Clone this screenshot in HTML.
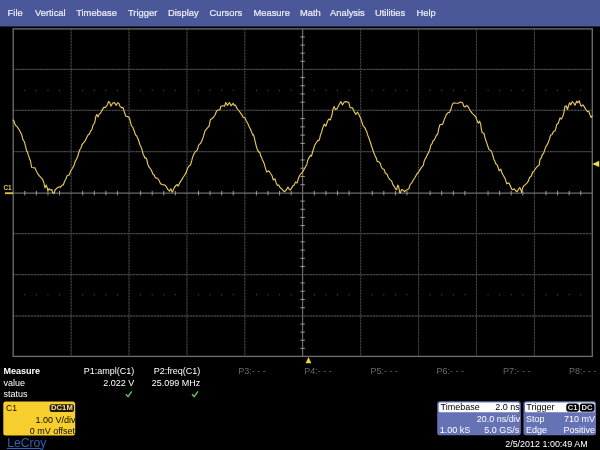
<!DOCTYPE html>
<html><head><meta charset="utf-8"><title>LeCroy</title>
<style>
html,body{margin:0;padding:0;background:#000;}
body{width:600px;height:450px;position:relative;overflow:hidden;font-family:"Liberation Sans",Arial,sans-serif;font-size:9px;color:#fff;}
#wrap{position:absolute;left:0;top:0;width:600px;height:450px;will-change:transform;overflow:hidden}
#menu{position:absolute;left:0;top:0;width:600px;height:25.5px;background:#4a5799;border-bottom:1.5px solid #20274d;box-sizing:content-box}
.mi{position:absolute;top:8.3px;-webkit-text-stroke:0.2px #eef0fa;font-size:9.35px;line-height:11px;color:#eef0fa;white-space:nowrap}
svg{position:absolute;left:0;top:0}
.gv{stroke:#484848;stroke-width:1;stroke-dasharray:1.5 1.5}
.gu{stroke:#262626;stroke-width:1}
.gu2{stroke:#2e2e2e;stroke-width:1}
.gh{stroke:#565656;stroke-width:1;stroke-dasharray:1.5 1.5}
.dot{fill:#5c5c5c}
.ax{stroke:#6c6c6c;stroke-width:1.2}
.tk{stroke:#9c9c9c;stroke-width:1}
.bd{fill:none;stroke:#707070;stroke-width:1.3}
.wf{fill:none;stroke:#e5c95c;stroke-width:1.15;stroke-linejoin:round;stroke-linecap:round}
.t{position:absolute;white-space:nowrap;line-height:11px;font-size:9px}
.r{text-align:right}
.pn{position:absolute;top:365.5px;white-space:nowrap;line-height:11px;font-size:9px;color:#6a6a6a}
#c1box{position:absolute;left:3.3px;top:401.5px;width:71.9px;height:34.2px;overflow:hidden;color:#1a1400}
#dc1m{position:absolute;left:46.5px;top:2.7px;width:24.2px;height:7.7px;color:#efe0a0;font-weight:bold;font-size:7.6px;line-height:8px;text-align:center;letter-spacing:0.1px}
.box{position:absolute;top:401.3px;height:34.3px;overflow:hidden}
.hd{display:none}
.bt{position:absolute;white-space:nowrap;line-height:11px;font-size:9px;color:#fff}
.bk{color:#000}
.bad{position:absolute;top:2.1px;height:8.5px;color:#e4e4e4;font-weight:bold;font-size:7.6px;line-height:10.4px;text-align:center}
#logo{position:absolute;left:7.2px;top:436.5px;font-size:12.15px;line-height:13px;color:#2f63b3;white-space:nowrap}
#logoul{position:absolute;left:7.3px;top:448.2px;width:34.2px;height:1.3px;background:#2f63b3}
</style></head><body>
<div id="wrap">
<div id="menu">
<span class="mi" style="left:7.6px">File</span>
<span class="mi" style="left:35px">Vertical</span>
<span class="mi" style="left:76.2px">Timebase</span>
<span class="mi" style="left:128px">Trigger</span>
<span class="mi" style="left:168px">Display</span>
<span class="mi" style="left:209.5px">Cursors</span>
<span class="mi" style="left:253.5px">Measure</span>
<span class="mi" style="left:300px">Math</span>
<span class="mi" style="left:330px">Analysis</span>
<span class="mi" style="left:375px">Utilities</span>
<span class="mi" style="left:416.5px">Help</span>
</div>
<svg width="600" height="450" viewBox="0 0 600 450">
<line x1="71.11" y1="28.9" x2="71.11" y2="356.4" class="gu"/>
<line x1="71.11" y1="28.9" x2="71.11" y2="356.4" class="gv"/>
<line x1="129.02" y1="28.9" x2="129.02" y2="356.4" class="gu"/>
<line x1="129.02" y1="28.9" x2="129.02" y2="356.4" class="gv"/>
<line x1="186.93" y1="28.9" x2="186.93" y2="356.4" class="gu"/>
<line x1="186.93" y1="28.9" x2="186.93" y2="356.4" class="gv"/>
<line x1="244.84" y1="28.9" x2="244.84" y2="356.4" class="gu"/>
<line x1="244.84" y1="28.9" x2="244.84" y2="356.4" class="gv"/>
<line x1="360.66" y1="28.9" x2="360.66" y2="356.4" class="gu"/>
<line x1="360.66" y1="28.9" x2="360.66" y2="356.4" class="gv"/>
<line x1="418.57" y1="28.9" x2="418.57" y2="356.4" class="gu"/>
<line x1="418.57" y1="28.9" x2="418.57" y2="356.4" class="gv"/>
<line x1="476.48" y1="28.9" x2="476.48" y2="356.4" class="gu"/>
<line x1="476.48" y1="28.9" x2="476.48" y2="356.4" class="gv"/>
<line x1="534.39" y1="28.9" x2="534.39" y2="356.4" class="gu"/>
<line x1="534.39" y1="28.9" x2="534.39" y2="356.4" class="gv"/>
<line x1="13.2" y1="69.40" x2="592.3" y2="69.40" class="gu2"/>
<line x1="13.2" y1="69.40" x2="592.3" y2="69.40" class="gh"/>
<line x1="13.2" y1="110.30" x2="592.3" y2="110.30" class="gu2"/>
<line x1="13.2" y1="110.30" x2="592.3" y2="110.30" class="gh"/>
<line x1="13.2" y1="151.70" x2="592.3" y2="151.70" class="gu2"/>
<line x1="13.2" y1="151.70" x2="592.3" y2="151.70" class="gh"/>
<line x1="13.2" y1="233.70" x2="592.3" y2="233.70" class="gu2"/>
<line x1="13.2" y1="233.70" x2="592.3" y2="233.70" class="gh"/>
<line x1="13.2" y1="274.70" x2="592.3" y2="274.70" class="gu2"/>
<line x1="13.2" y1="274.70" x2="592.3" y2="274.70" class="gh"/>
<line x1="13.2" y1="316.00" x2="592.3" y2="316.00" class="gu2"/>
<line x1="13.2" y1="316.00" x2="592.3" y2="316.00" class="gh"/>
<rect x="24.28" y="89.80" width="1" height="1" class="dot"/>
<rect x="35.86" y="89.80" width="1" height="1" class="dot"/>
<rect x="47.45" y="89.80" width="1" height="1" class="dot"/>
<rect x="59.03" y="89.80" width="1" height="1" class="dot"/>
<rect x="82.19" y="89.80" width="1" height="1" class="dot"/>
<rect x="93.77" y="89.80" width="1" height="1" class="dot"/>
<rect x="105.36" y="89.80" width="1" height="1" class="dot"/>
<rect x="116.94" y="89.80" width="1" height="1" class="dot"/>
<rect x="140.10" y="89.80" width="1" height="1" class="dot"/>
<rect x="151.68" y="89.80" width="1" height="1" class="dot"/>
<rect x="163.27" y="89.80" width="1" height="1" class="dot"/>
<rect x="174.85" y="89.80" width="1" height="1" class="dot"/>
<rect x="198.01" y="89.80" width="1" height="1" class="dot"/>
<rect x="209.59" y="89.80" width="1" height="1" class="dot"/>
<rect x="221.18" y="89.80" width="1" height="1" class="dot"/>
<rect x="232.76" y="89.80" width="1" height="1" class="dot"/>
<rect x="255.92" y="89.80" width="1" height="1" class="dot"/>
<rect x="267.50" y="89.80" width="1" height="1" class="dot"/>
<rect x="279.09" y="89.80" width="1" height="1" class="dot"/>
<rect x="290.67" y="89.80" width="1" height="1" class="dot"/>
<rect x="313.83" y="89.80" width="1" height="1" class="dot"/>
<rect x="325.41" y="89.80" width="1" height="1" class="dot"/>
<rect x="337.00" y="89.80" width="1" height="1" class="dot"/>
<rect x="348.58" y="89.80" width="1" height="1" class="dot"/>
<rect x="371.74" y="89.80" width="1" height="1" class="dot"/>
<rect x="383.32" y="89.80" width="1" height="1" class="dot"/>
<rect x="394.91" y="89.80" width="1" height="1" class="dot"/>
<rect x="406.49" y="89.80" width="1" height="1" class="dot"/>
<rect x="429.65" y="89.80" width="1" height="1" class="dot"/>
<rect x="441.23" y="89.80" width="1" height="1" class="dot"/>
<rect x="452.82" y="89.80" width="1" height="1" class="dot"/>
<rect x="464.40" y="89.80" width="1" height="1" class="dot"/>
<rect x="487.56" y="89.80" width="1" height="1" class="dot"/>
<rect x="499.14" y="89.80" width="1" height="1" class="dot"/>
<rect x="510.73" y="89.80" width="1" height="1" class="dot"/>
<rect x="522.31" y="89.80" width="1" height="1" class="dot"/>
<rect x="545.47" y="89.80" width="1" height="1" class="dot"/>
<rect x="557.05" y="89.80" width="1" height="1" class="dot"/>
<rect x="568.64" y="89.80" width="1" height="1" class="dot"/>
<rect x="580.22" y="89.80" width="1" height="1" class="dot"/>
<rect x="24.28" y="294.30" width="1" height="1" class="dot"/>
<rect x="35.86" y="294.30" width="1" height="1" class="dot"/>
<rect x="47.45" y="294.30" width="1" height="1" class="dot"/>
<rect x="59.03" y="294.30" width="1" height="1" class="dot"/>
<rect x="82.19" y="294.30" width="1" height="1" class="dot"/>
<rect x="93.77" y="294.30" width="1" height="1" class="dot"/>
<rect x="105.36" y="294.30" width="1" height="1" class="dot"/>
<rect x="116.94" y="294.30" width="1" height="1" class="dot"/>
<rect x="140.10" y="294.30" width="1" height="1" class="dot"/>
<rect x="151.68" y="294.30" width="1" height="1" class="dot"/>
<rect x="163.27" y="294.30" width="1" height="1" class="dot"/>
<rect x="174.85" y="294.30" width="1" height="1" class="dot"/>
<rect x="198.01" y="294.30" width="1" height="1" class="dot"/>
<rect x="209.59" y="294.30" width="1" height="1" class="dot"/>
<rect x="221.18" y="294.30" width="1" height="1" class="dot"/>
<rect x="232.76" y="294.30" width="1" height="1" class="dot"/>
<rect x="255.92" y="294.30" width="1" height="1" class="dot"/>
<rect x="267.50" y="294.30" width="1" height="1" class="dot"/>
<rect x="279.09" y="294.30" width="1" height="1" class="dot"/>
<rect x="290.67" y="294.30" width="1" height="1" class="dot"/>
<rect x="313.83" y="294.30" width="1" height="1" class="dot"/>
<rect x="325.41" y="294.30" width="1" height="1" class="dot"/>
<rect x="337.00" y="294.30" width="1" height="1" class="dot"/>
<rect x="348.58" y="294.30" width="1" height="1" class="dot"/>
<rect x="371.74" y="294.30" width="1" height="1" class="dot"/>
<rect x="383.32" y="294.30" width="1" height="1" class="dot"/>
<rect x="394.91" y="294.30" width="1" height="1" class="dot"/>
<rect x="406.49" y="294.30" width="1" height="1" class="dot"/>
<rect x="429.65" y="294.30" width="1" height="1" class="dot"/>
<rect x="441.23" y="294.30" width="1" height="1" class="dot"/>
<rect x="452.82" y="294.30" width="1" height="1" class="dot"/>
<rect x="464.40" y="294.30" width="1" height="1" class="dot"/>
<rect x="487.56" y="294.30" width="1" height="1" class="dot"/>
<rect x="499.14" y="294.30" width="1" height="1" class="dot"/>
<rect x="510.73" y="294.30" width="1" height="1" class="dot"/>
<rect x="522.31" y="294.30" width="1" height="1" class="dot"/>
<rect x="545.47" y="294.30" width="1" height="1" class="dot"/>
<rect x="557.05" y="294.30" width="1" height="1" class="dot"/>
<rect x="568.64" y="294.30" width="1" height="1" class="dot"/>
<rect x="580.22" y="294.30" width="1" height="1" class="dot"/>
<line x1="13.2" y1="193.10" x2="592.3" y2="193.10" class="ax"/>
<line x1="302.60" y1="28.9" x2="302.60" y2="356.4" class="ax"/>
<line x1="24.78" y1="190.90" x2="24.78" y2="195.30" class="tk"/>
<line x1="36.36" y1="190.90" x2="36.36" y2="195.30" class="tk"/>
<line x1="47.95" y1="190.90" x2="47.95" y2="195.30" class="tk"/>
<line x1="59.53" y1="190.90" x2="59.53" y2="195.30" class="tk"/>
<line x1="82.69" y1="190.90" x2="82.69" y2="195.30" class="tk"/>
<line x1="94.27" y1="190.90" x2="94.27" y2="195.30" class="tk"/>
<line x1="105.86" y1="190.90" x2="105.86" y2="195.30" class="tk"/>
<line x1="117.44" y1="190.90" x2="117.44" y2="195.30" class="tk"/>
<line x1="140.60" y1="190.90" x2="140.60" y2="195.30" class="tk"/>
<line x1="152.18" y1="190.90" x2="152.18" y2="195.30" class="tk"/>
<line x1="163.77" y1="190.90" x2="163.77" y2="195.30" class="tk"/>
<line x1="175.35" y1="190.90" x2="175.35" y2="195.30" class="tk"/>
<line x1="198.51" y1="190.90" x2="198.51" y2="195.30" class="tk"/>
<line x1="210.09" y1="190.90" x2="210.09" y2="195.30" class="tk"/>
<line x1="221.68" y1="190.90" x2="221.68" y2="195.30" class="tk"/>
<line x1="233.26" y1="190.90" x2="233.26" y2="195.30" class="tk"/>
<line x1="256.42" y1="190.90" x2="256.42" y2="195.30" class="tk"/>
<line x1="268.00" y1="190.90" x2="268.00" y2="195.30" class="tk"/>
<line x1="279.59" y1="190.90" x2="279.59" y2="195.30" class="tk"/>
<line x1="291.17" y1="190.90" x2="291.17" y2="195.30" class="tk"/>
<line x1="314.33" y1="190.90" x2="314.33" y2="195.30" class="tk"/>
<line x1="325.91" y1="190.90" x2="325.91" y2="195.30" class="tk"/>
<line x1="337.50" y1="190.90" x2="337.50" y2="195.30" class="tk"/>
<line x1="349.08" y1="190.90" x2="349.08" y2="195.30" class="tk"/>
<line x1="372.24" y1="190.90" x2="372.24" y2="195.30" class="tk"/>
<line x1="383.82" y1="190.90" x2="383.82" y2="195.30" class="tk"/>
<line x1="395.41" y1="190.90" x2="395.41" y2="195.30" class="tk"/>
<line x1="406.99" y1="190.90" x2="406.99" y2="195.30" class="tk"/>
<line x1="430.15" y1="190.90" x2="430.15" y2="195.30" class="tk"/>
<line x1="441.73" y1="190.90" x2="441.73" y2="195.30" class="tk"/>
<line x1="453.32" y1="190.90" x2="453.32" y2="195.30" class="tk"/>
<line x1="464.90" y1="190.90" x2="464.90" y2="195.30" class="tk"/>
<line x1="488.06" y1="190.90" x2="488.06" y2="195.30" class="tk"/>
<line x1="499.64" y1="190.90" x2="499.64" y2="195.30" class="tk"/>
<line x1="511.23" y1="190.90" x2="511.23" y2="195.30" class="tk"/>
<line x1="522.81" y1="190.90" x2="522.81" y2="195.30" class="tk"/>
<line x1="545.97" y1="190.90" x2="545.97" y2="195.30" class="tk"/>
<line x1="557.55" y1="190.90" x2="557.55" y2="195.30" class="tk"/>
<line x1="569.14" y1="190.90" x2="569.14" y2="195.30" class="tk"/>
<line x1="580.72" y1="190.90" x2="580.72" y2="195.30" class="tk"/>
<line x1="300.40" y1="37.00" x2="304.80" y2="37.00" class="tk"/>
<line x1="300.40" y1="45.10" x2="304.80" y2="45.10" class="tk"/>
<line x1="300.40" y1="53.20" x2="304.80" y2="53.20" class="tk"/>
<line x1="300.40" y1="61.30" x2="304.80" y2="61.30" class="tk"/>
<line x1="300.40" y1="77.58" x2="304.80" y2="77.58" class="tk"/>
<line x1="300.40" y1="85.76" x2="304.80" y2="85.76" class="tk"/>
<line x1="300.40" y1="93.94" x2="304.80" y2="93.94" class="tk"/>
<line x1="300.40" y1="102.12" x2="304.80" y2="102.12" class="tk"/>
<line x1="300.40" y1="118.58" x2="304.80" y2="118.58" class="tk"/>
<line x1="300.40" y1="126.86" x2="304.80" y2="126.86" class="tk"/>
<line x1="300.40" y1="135.14" x2="304.80" y2="135.14" class="tk"/>
<line x1="300.40" y1="143.42" x2="304.80" y2="143.42" class="tk"/>
<line x1="300.40" y1="159.96" x2="304.80" y2="159.96" class="tk"/>
<line x1="300.40" y1="168.22" x2="304.80" y2="168.22" class="tk"/>
<line x1="300.40" y1="176.48" x2="304.80" y2="176.48" class="tk"/>
<line x1="300.40" y1="184.74" x2="304.80" y2="184.74" class="tk"/>
<line x1="300.40" y1="201.14" x2="304.80" y2="201.14" class="tk"/>
<line x1="300.40" y1="209.28" x2="304.80" y2="209.28" class="tk"/>
<line x1="300.40" y1="217.42" x2="304.80" y2="217.42" class="tk"/>
<line x1="300.40" y1="225.56" x2="304.80" y2="225.56" class="tk"/>
<line x1="300.40" y1="241.90" x2="304.80" y2="241.90" class="tk"/>
<line x1="300.40" y1="250.10" x2="304.80" y2="250.10" class="tk"/>
<line x1="300.40" y1="258.30" x2="304.80" y2="258.30" class="tk"/>
<line x1="300.40" y1="266.50" x2="304.80" y2="266.50" class="tk"/>
<line x1="300.40" y1="282.96" x2="304.80" y2="282.96" class="tk"/>
<line x1="300.40" y1="291.22" x2="304.80" y2="291.22" class="tk"/>
<line x1="300.40" y1="299.48" x2="304.80" y2="299.48" class="tk"/>
<line x1="300.40" y1="307.74" x2="304.80" y2="307.74" class="tk"/>
<line x1="300.40" y1="324.08" x2="304.80" y2="324.08" class="tk"/>
<line x1="300.40" y1="332.16" x2="304.80" y2="332.16" class="tk"/>
<line x1="300.40" y1="340.24" x2="304.80" y2="340.24" class="tk"/>
<line x1="300.40" y1="348.32" x2="304.80" y2="348.32" class="tk"/>
<rect x="13.2" y="28.9" width="579.10" height="327.50" class="bd"/>
<polyline class="wf" points="13.0,120.2 13.7,120.1 14.7,123.5 15.8,125.6 17.0,126.5 18.1,128.1 19.3,130.0 20.1,131.6 21.7,134.7 22.8,139.4 23.5,140.5 24.5,142.0 25.2,145.2 26.6,150.6 27.5,152.2 28.4,155.4 29.8,159.2 30.5,161.0 31.7,167.5 35.0,167.9 36.2,170.8 37.5,173.3 39.6,176.2 42.5,179.2 43.8,182.5 45.0,187.9 46.2,185.0 47.5,188.8 47.9,190.8 49.0,188.8 50.4,190.0 51.8,189.6 52.7,192.9 54.2,193.3 55.0,190.0 56.7,188.3 59.2,186.8 60.4,187.3 62.1,185.0 63.3,185.0 64.6,181.2 65.8,179.2 67.1,175.8 69.2,175.0 70.8,170.8 72.5,168.3 74.2,165.0 75.2,161.4 76.5,159.2 77.9,156.1 78.9,152.2 79.9,149.5 81.2,147.5 82.1,144.5 83.5,142.9 84.9,141.2 85.9,139.4 86.7,137.6 88.2,134.7 89.3,134.1 90.6,131.2 91.5,130.1 92.2,128.7 93.0,125.3 94.7,122.8 95.9,116.2 96.8,114.5 98.0,117.0 99.2,114.1 100.5,113.2 102.2,109.9 103.8,107.4 105.5,107.4 107.6,104.5 108.4,101.6 109.7,102.4 110.9,106.2 112.6,103.2 114.2,102.4 116.3,105.3 117.6,102.8 118.8,103.2 120.1,106.6 121.8,107.8 123.0,107.4 124.2,111.6 125.9,116.2 127.6,116.6 128.8,117.0 130.1,120.3 131.3,125.3 133.0,127.8 134.3,131.2 135.5,135.0 136.7,135.9 138.2,139.2 139.0,141.7 140.0,145.0 141.3,147.5 142.0,149.7 143.2,154.5 143.8,155.3 144.8,158.0 145.4,157.6 146.5,158.5 147.9,164.5 148.8,166.7 151.3,170.0 153.0,174.2 154.2,175.0 155.5,177.9 157.6,178.3 159.2,180.8 160.5,183.8 162.6,184.6 164.7,185.0 166.3,186.7 168.0,189.6 169.5,191.2 170.9,188.8 172.2,192.1 173.0,190.8 174.2,187.9 175.9,185.4 177.2,184.6 178.0,186.2 179.7,182.9 181.3,180.4 183.0,177.5 184.7,175.0 186.3,172.1 187.6,168.3 188.8,166.2 190.5,165.0 191.8,160.4 192.7,156.9 193.9,154.0 195.0,152.2 196.0,151.1 197.4,149.9 198.7,145.2 199.7,144.0 200.5,143.6 202.0,140.5 203.3,136.9 205.0,130.8 207.5,127.9 209.2,125.8 210.4,119.6 211.7,118.8 213.3,117.5 215.0,115.0 216.7,110.8 218.3,110.0 220.0,109.6 220.8,106.2 222.9,105.8 224.6,106.2 225.8,102.5 227.5,105.4 229.4,102.5 231.0,105.8 233.1,103.3 234.2,105.4 235.4,105.0 236.7,107.9 238.3,110.0 240.0,112.1 241.7,114.6 243.3,117.5 245.0,117.9 246.2,120.8 247.9,123.8 249.2,126.7 250.8,130.0 251.7,132.4 252.7,135.0 253.5,134.7 254.3,137.6 255.2,141.7 256.6,147.3 257.5,149.9 258.8,152.1 259.8,152.2 260.7,156.1 261.5,156.9 262.3,159.7 263.3,161.5 264.4,164.3 265.0,166.7 266.7,172.1 268.8,170.8 270.4,173.3 272.1,175.8 273.3,180.0 275.0,178.8 276.2,182.9 277.5,185.4 278.8,185.0 280.0,187.5 281.7,188.8 283.3,190.8 284.6,191.7 286.2,190.0 287.9,187.1 289.2,189.2 290.4,190.0 291.7,187.9 292.9,185.8 294.2,185.0 295.4,182.1 297.1,182.9 297.9,180.0 299.2,176.2 300.8,173.8 302.5,172.1 304.2,169.2 305.8,166.2 306.7,165.0 307.7,160.4 308.7,158.1 309.6,156.9 310.4,155.3 311.2,156.2 311.8,155.1 312.8,151.0 313.7,148.6 314.7,145.2 316.0,143.0 317.0,141.7 317.9,140.2 318.9,140.5 319.8,138.1 320.5,134.7 321.6,132.4 322.5,128.7 324.2,124.1 325.8,126.2 327.5,121.2 328.8,119.1 330.4,119.9 332.1,114.5 332.9,109.5 334.2,106.6 335.4,109.5 336.7,109.1 338.3,106.2 339.6,103.7 340.8,101.6 342.5,104.9 344.2,102.0 345.8,101.6 347.5,102.0 348.8,102.4 350.0,107.4 351.2,107.8 352.5,107.8 354.2,111.6 355.8,114.5 357.5,112.0 359.2,115.3 360.8,118.7 362.1,122.8 363.3,126.2 365.0,127.8 365.9,130.3 366.7,131.2 367.4,134.4 368.5,137.0 369.6,140.0 370.9,144.0 371.9,147.3 373.2,151.0 374.5,154.5 375.5,156.9 376.3,158.1 377.2,161.5 378.6,161.6 379.5,162.7 380.3,163.4 381.2,166.7 382.5,168.8 384.2,169.6 385.4,173.3 387.1,174.2 388.3,177.5 390.0,179.6 391.7,181.2 392.9,184.6 394.6,187.1 395.8,189.2 396.7,189.6 397.7,185.0 398.8,187.1 399.6,192.5 400.4,192.9 401.5,189.6 402.9,190.0 404.6,191.7 405.8,190.4 407.5,189.6 408.8,188.8 410.0,185.0 411.7,182.9 413.3,180.0 415.0,177.5 416.7,174.2 418.3,172.5 420.0,169.6 421.7,167.1 423.3,165.4 424.1,161.4 425.0,159.2 426.1,157.7 427.4,154.5 428.6,152.6 429.2,151.0 429.9,149.0 430.9,145.2 432.1,143.6 433.2,140.5 434.4,139.9 435.6,137.0 436.4,135.3 437.2,134.7 438.0,132.9 438.8,128.7 440.0,124.5 442.5,124.5 444.2,119.9 446.2,114.9 447.9,112.8 449.6,112.4 451.2,108.2 452.5,104.1 453.8,102.8 455.8,103.2 458.3,103.2 460.4,102.0 462.5,102.8 463.8,106.2 465.0,107.0 466.7,105.3 468.3,107.0 470.0,110.3 472.1,113.2 473.8,114.9 475.4,116.2 476.7,119.5 478.3,123.2 479.6,121.2 480.8,124.5 481.2,128.7 482.1,132.4 483.2,133.0 484.0,133.5 484.9,137.4 485.9,140.5 486.7,142.9 487.5,145.2 489.0,149.5 489.8,149.9 491.2,150.9 492.2,153.4 493.0,156.0 493.8,159.2 495.0,161.6 495.7,163.9 496.8,164.3 497.5,165.8 499.2,170.8 500.8,169.2 502.1,173.3 503.8,176.2 505.4,179.2 506.7,183.8 508.8,182.9 510.0,185.0 511.7,189.2 512.9,189.6 514.2,188.8 515.8,190.8 517.1,191.7 518.3,189.6 519.8,187.5 521.0,190.0 521.7,192.5 522.5,188.3 523.8,185.8 525.4,184.6 527.1,182.9 528.3,181.2 529.6,177.5 531.2,176.2 532.5,172.5 534.2,170.8 535.8,168.3 537.5,166.2 539.2,165.0 540.0,159.2 541.1,158.3 542.4,154.5 543.6,153.4 544.7,149.9 545.9,146.7 547.0,145.2 548.4,142.0 549.4,139.4 550.3,136.0 551.2,134.7 552.1,134.6 553.6,131.2 555.0,131.0 555.8,128.7 556.7,124.5 558.3,123.2 560.0,117.8 561.2,119.1 562.5,117.0 563.8,113.2 565.0,106.2 566.2,105.8 567.5,109.5 568.8,104.9 569.6,102.8 570.8,104.9 572.1,101.6 573.8,103.2 575.0,105.3 576.7,101.2 577.9,102.8 579.2,100.8 580.4,104.5 581.2,106.2 582.9,104.9 584.2,106.6 585.8,109.5 587.5,111.6 588.8,111.2 590.0,114.9 591.2,117.4 592.1,116.2"/>
<rect x="5" y="192.3" width="8" height="1.8" fill="#e6c84c"/>
<polygon points="592.3,163.9 599.2,160.7 599.2,167.1" fill="#f4d850"/>
<polygon points="308.5,356.9 305.6,363.2 311.4,363.2" fill="#f2d24a"/>
<rect x="3.3" y="401.6" width="71.9" height="33.9" rx="2.5" fill="#f6ce2e"/>
<rect x="49.7" y="404.3" width="24.3" height="7.7" rx="2" fill="#221a04"/>
<rect x="437.2" y="401.2" width="83.6" height="34" rx="2.5" fill="#6573b4"/>
<rect x="438.7" y="402.5" width="80.7" height="9.7" rx="1.5" fill="#fff"/>
<rect x="523.5" y="401.2" width="72.5" height="34" rx="2.5" fill="#6573b4"/>
<rect x="525" y="402.5" width="69.8" height="9.7" rx="1.5" fill="#fff"/>
<rect x="566.3" y="403.4" width="12.6" height="8.4" rx="2.5" fill="#000"/>
<rect x="579.8" y="403.4" width="14.7" height="8.4" rx="2.5" fill="#000"/>
<path d="M125.8,394.2 L128,396.6 L131.8,391.4" fill="none" stroke="#5fc25f" stroke-width="1.5"/>
<path d="M192,394.2 L194.2,396.6 L198,391.4" fill="none" stroke="#5fc25f" stroke-width="1.5"/>
</svg>
<span class="t" style="left:3.4px;top:183.5px;font-size:6.4px;line-height:8px;font-weight:bold;color:#e6c84c">C1</span>
<span class="t" style="left:3.6px;top:365.5px;font-weight:bold">Measure</span>
<span class="t" style="left:3.6px;top:377.7px">value</span>
<span class="t" style="left:3.6px;top:389.1px">status</span>
<span class="t r" style="left:60px;width:74.3px;top:365.5px">P1:ampl(C1)</span>
<span class="t r" style="left:60px;width:74.3px;top:377.7px">2.022 V</span>
<span class="t r" style="left:126px;width:74.3px;top:365.5px">P2:freq(C1)</span>
<span class="t r" style="left:126px;width:74.3px;top:377.7px">25.099 MHz</span>
<span class="pn" style="left:238.3px">P3:- - -</span>
<span class="pn" style="left:304.3px">P4:- - -</span>
<span class="pn" style="left:370.6px">P5:- - -</span>
<span class="pn" style="left:436.6px">P6:- - -</span>
<span class="pn" style="left:503px">P7:- - -</span>
<span class="pn" style="left:569.1px">P8:- - -</span>
<div id="c1box">
<span class="t" style="left:2.8px;top:1.6px;font-size:8.6px;color:#0c0800">C1</span>
<div id="dc1m">DC1M</div>
<span class="t r" style="right:-0.4px;top:13.4px;color:#0c0800">1.00 V/div</span>
<span class="t r" style="right:0.2px;top:24.4px;color:#0c0800">0 mV offset</span>
</div>
<div id="logo">LeCroy</div><div id="logoul"></div>
<div class="box" style="left:437px;width:83.8px">
<div class="hd" style="width:80.6px"></div>
<span class="bt bk" style="left:3.6px;top:0.8px">Timebase</span>
<span class="bt bk" style="right:1px;top:0.8px">2.0 ns</span>
<span class="bt" style="right:0.5px;top:13.2px">20.0 ns/div</span>
<span class="bt" style="left:2.8px;top:24px">1.00 kS</span>
<span class="bt" style="right:1.5px;top:24px">5.0 GS/s</span>
</div>
<div class="box" style="left:523.5px;width:72.5px">
<div class="hd" style="width:69.6px"></div>
<span class="bt bk" style="left:2.8px;top:0.8px">Trigger</span>
<div class="bad" style="left:42.9px;width:12.4px">C1</div>
<div class="bad" style="left:56.2px;width:14.6px">DC</div>
<span class="bt" style="left:2.6px;top:13.2px">Stop</span>
<span class="bt" style="right:1px;top:13.2px">710 mV</span>
<span class="bt" style="left:2.6px;top:24px">Edge</span>
<span class="bt" style="right:1px;top:24px">Positive</span>
</div>
<span class="t" style="left:505.2px;top:438.6px;font-size:8.95px">2/5/2012 1:00:49 AM</span>
</div>
</body></html>
